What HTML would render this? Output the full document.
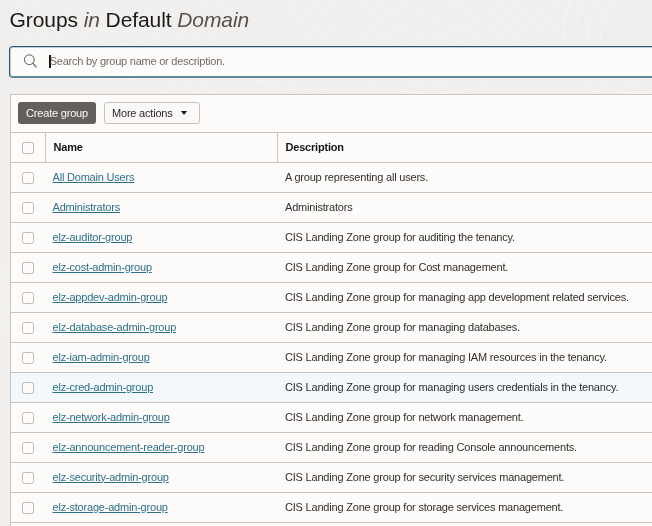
<!DOCTYPE html>
<html><head><meta charset="utf-8">
<style>
*{box-sizing:border-box;margin:0;padding:0}
html,body{width:652px;height:526px;overflow:hidden;background:#f1efed;font-family:"Liberation Sans",sans-serif;color:#161513}
.wrap{position:absolute;left:0;top:0;width:652px;height:526px;overflow:hidden;will-change:transform}
.tex{position:absolute;left:0;top:0}
h1{position:absolute;left:9.6px;top:7px;font-size:21px;font-weight:400;line-height:26px;white-space:nowrap;color:#1c1a18;letter-spacing:-0.09px}
h1 i{color:#56514d}
.search{position:absolute;left:9px;top:46px;width:700px;height:32px;border:1px solid #275b70;border-bottom-color:#5f8799;border-radius:4px;background:#fdfcfb;box-shadow:inset 0 -1px 0 0 rgba(43,97,118,.6),inset 0 0 0 1px rgba(43,97,118,.3)}
.search svg{position:absolute;left:13.2px;top:6px}
.search .cur{position:absolute;left:38.7px;top:8px;width:2px;height:13px;background:#161513}
.search span{position:absolute;left:39.7px;top:7px;font-size:11px;line-height:14px;color:#706b67;white-space:nowrap;letter-spacing:-0.23px}
.panel{position:absolute;left:10px;top:94px;width:700px;height:500px;border:1px solid #c9c4c0;background:#fdfcfb}
.btn{position:absolute;top:7px;height:22px;border-radius:3px;font-size:11px;line-height:20px;white-space:nowrap;letter-spacing:-0.2px}
.b1{left:7px;width:78px;background:#655f5b;color:#faf8f7;text-align:center;border:1px solid #655f5b;border-radius:2.5px}
.b2{left:93px;width:96px;border:1px solid #c4bfbb;background:#fbf9f8;padding-left:7px;color:#2a2725}
.b2 i{position:absolute;left:75.5px;top:8.3px;border:3.5px solid transparent;border-top:4px solid #161513;border-bottom:0}
table{position:absolute;left:0;top:37px;width:698px;border-collapse:collapse;font-size:11px;letter-spacing:-0.2px}
td,th{height:30px;border-top:1px solid #c9c4c0;text-align:left;vertical-align:middle;white-space:nowrap;padding:0}
th{font-weight:700}
.c{width:34px}
.n{width:232px;padding-left:7.5px}
th.n{border-left:1px solid #c9c4c0;padding-left:8px}
th.d{border-left:1px solid #c9c4c0}
.d{padding-left:8px}
.n,.d{padding-bottom:2px}
td{color:#312e2b}
.cb{display:block;width:12px;height:12px;margin-left:11px;border:1px solid #bdb8b4;border-radius:2.5px;background:#fdfcfb}
a{color:#2e7088;text-decoration:underline}
tr.h td{background:#f2f8fb}
</style></head><body><div class="wrap">
<svg class="tex" width="652" height="526" viewBox="0 0 652 526"><g fill="none" stroke="#f7f6f4" stroke-width="1.2" opacity=".6">
<circle cx="120" cy="-40" r="60"/><circle cx="120" cy="-40" r="72"/><circle cx="120" cy="-40" r="84"/><circle cx="120" cy="-40" r="96"/><circle cx="120" cy="-40" r="108"/><circle cx="120" cy="-40" r="120"/>
<circle cx="430" cy="-60" r="70"/><circle cx="430" cy="-60" r="82"/><circle cx="430" cy="-60" r="94"/><circle cx="430" cy="-60" r="106"/><circle cx="430" cy="-60" r="118"/><circle cx="430" cy="-60" r="130"/><circle cx="430" cy="-60" r="142"/><circle cx="430" cy="-60" r="154"/>
<circle cx="640" cy="30" r="40"/><circle cx="640" cy="30" r="52"/><circle cx="640" cy="30" r="64"/><circle cx="640" cy="30" r="76"/>
<circle cx="-60" cy="300" r="62"/><circle cx="-60" cy="300" r="66"/><circle cx="-60" cy="300" r="70"/><circle cx="-60" cy="300" r="58"/>
<circle cx="250" cy="140" r="60"/><circle cx="250" cy="140" r="72"/><circle cx="250" cy="140" r="84"/><circle cx="250" cy="140" r="96"/>
</g></svg>
<h1>Groups <i>in</i> Default <i>Domain</i></h1>
<div class="search">
<svg width="16" height="16" viewBox="0 0 16 16"><circle cx="6.3" cy="6.7" r="4.9" fill="none" stroke="#5b5652" stroke-width="1"/><path d="M9.7 10.2 L13.5 14.3" stroke="#5b5652" stroke-width="1.1" fill="none"/></svg>
<div class="cur"></div><span>Search by group name or description.</span>
</div>
<div class="panel">
<div class="btn b1">Create group</div>
<div class="btn b2">More actions<i></i></div>
<table>
<tr><th class="c"><span class="cb"></span></th><th class="n">Name</th><th class="d">Description</th></tr>
<tr><td class="c"><span class="cb"></span></td><td class="n"><a>All Domain Users</a></td><td class="d">A group representing all users.</td></tr>
<tr><td class="c"><span class="cb"></span></td><td class="n"><a>Administrators</a></td><td class="d">Administrators</td></tr>
<tr><td class="c"><span class="cb"></span></td><td class="n"><a>elz-auditor-group</a></td><td class="d">CIS Landing Zone group for auditing the tenancy.</td></tr>
<tr><td class="c"><span class="cb"></span></td><td class="n"><a>elz-cost-admin-group</a></td><td class="d">CIS Landing Zone group for Cost management.</td></tr>
<tr><td class="c"><span class="cb"></span></td><td class="n"><a>elz-appdev-admin-group</a></td><td class="d">CIS Landing Zone group for managing app development related services.</td></tr>
<tr><td class="c"><span class="cb"></span></td><td class="n"><a>elz-database-admin-group</a></td><td class="d">CIS Landing Zone group for managing databases.</td></tr>
<tr><td class="c"><span class="cb"></span></td><td class="n"><a>elz-iam-admin-group</a></td><td class="d">CIS Landing Zone group for managing IAM resources in the tenancy.</td></tr>
<tr class="h"><td class="c"><span class="cb"></span></td><td class="n"><a>elz-cred-admin-group</a></td><td class="d">CIS Landing Zone group for managing users credentials in the tenancy.</td></tr>
<tr><td class="c"><span class="cb"></span></td><td class="n"><a>elz-network-admin-group</a></td><td class="d">CIS Landing Zone group for network management.</td></tr>
<tr><td class="c"><span class="cb"></span></td><td class="n"><a>elz-announcement-reader-group</a></td><td class="d">CIS Landing Zone group for reading Console announcements.</td></tr>
<tr><td class="c"><span class="cb"></span></td><td class="n"><a>elz-security-admin-group</a></td><td class="d">CIS Landing Zone group for security services management.</td></tr>
<tr><td class="c"><span class="cb"></span></td><td class="n"><a>elz-storage-admin-group</a></td><td class="d">CIS Landing Zone group for storage services management.</td></tr>
<tr><td class="c"><span class="cb"></span></td><td class="n"><a>elz-basic-group</a></td><td class="d">CIS Landing Zone group.</td></tr>
</table>
</div>
</div></body></html>
